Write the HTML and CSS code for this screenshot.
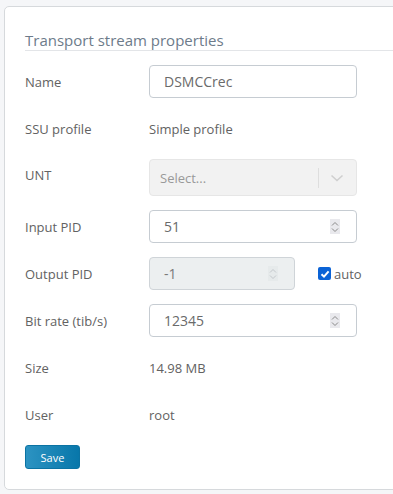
FILE: index.html
```html
<!DOCTYPE html>
<html lang="en">
<head>
  <meta charset="UTF-8" />
  <title>Transport stream properties</title>
  <link rel="stylesheet" href="styles.css">
</head>
<body>
  <div class="panel">
    <h2 class="panel-title">Transport stream properties</h2>

    <div class="form">
      <div class="row">
        <label for="tsName">Name</label>
        <input type="text" id="tsName" class="field" value="DSMCCrec" />
      </div>

      <div class="row">
        <label>SSU profile</label>
        <span class="value">Simple profile</span>
      </div>

      <div class="row row-tall">
        <label>UNT</label>
        <div class="select disabled">
          <span class="placeholder">Select...</span>
          <span class="select-sep"></span>
          <svg class="select-arrow" width="14" height="8" viewBox="0 0 14 8">
            <path d="M1.5 1.5 L7 6.5 L12.5 1.5" fill="none" stroke="#cfcfcf" stroke-width="1.6" />
          </svg>
        </div>
      </div>

      <div class="row">
        <label for="inputPid">Input PID</label>
        <div class="field number">
          <span>51</span>
          <span class="spin">
            <svg width="10" height="14" viewBox="0 0 10 14">
              <path d="M2 5.5 L5 2.5 L8 5.5 M2 8.5 L5 11.5 L8 8.5" fill="none" stroke="#8a8a8a" stroke-width="1" />
            </svg>
          </span>
        </div>
      </div>

      <div class="row">
        <label>Output PID</label>
        <div class="field number readonly short">
          <span>-1</span>
          <span class="spin">
            <svg width="10" height="14" viewBox="0 0 10 14">
              <path d="M2 5.5 L5 2.5 L8 5.5 M2 8.5 L5 11.5 L8 8.5" fill="none" stroke="#c4c8cc" stroke-width="1" />
            </svg>
          </span>
        </div>
        <label class="check">
          <span class="box">
            <svg width="12" height="12" viewBox="0 0 12 12">
              <path d="M2.5 6.2 L5 8.6 L9.6 3.4" fill="none" stroke="#fff" stroke-width="2" />
            </svg>
          </span>
          auto
        </label>
      </div>

      <div class="row">
        <label for="bitrate">Bit rate (tib/s)</label>
        <div class="field number">
          <span>12345</span>
          <span class="spin">
            <svg width="10" height="14" viewBox="0 0 10 14">
              <path d="M2 5.5 L5 2.5 L8 5.5 M2 8.5 L5 11.5 L8 8.5" fill="none" stroke="#8a8a8a" stroke-width="1" />
            </svg>
          </span>
        </div>
      </div>

      <div class="row">
        <label>Size</label>
        <span class="value">14.98 MB</span>
      </div>

      <div class="row">
        <label>User</label>
        <span class="value">root</span>
      </div>
    </div>

    <button class="btn-save">Save</button>
  </div>
</body>
</html>
```

FILE: styles.css
```css
body {
  margin: 0;
  font-family: 'Open Sans', sans-serif;
  font-size: 13px;
  color: #626262;
  background: #f5f6f8;
  overflow: hidden;
}

.panel {
  margin: 6px 0 0 4px;
  width: 430px;
  height: 484px;
  box-sizing: border-box;
  background: #fff;
  border: 1px solid #d6d9dc;
  border-radius: 5px;
  padding: 24px 0 0 20px;
}

.panel-title {
  margin: 0;
  font-size: 15px;
  font-weight: normal;
  color: #6d7b8a;
  line-height: 18px;
  padding-bottom: 1px;
  border-bottom: 1px solid #e3e5e8;
}

.form {
  display: grid;
  row-gap: 14px;
  margin-top: 14px;
}

.row {
  display: flex;
  align-items: center;
  height: 33px;
}

.row-tall {
  height: 37px;
}

.row-tall > label:first-child {
  margin-bottom: 5px;
}

.row > label:first-child {
  width: 124px;
  flex-shrink: 0;
}

.value {
  color: #626262;
}

.field {
  box-sizing: border-box;
  width: 208px;
  height: 33px;
  border: 1px solid #c6ccd2;
  border-radius: 4px;
  padding: 0 14px;
  font-family: inherit;
  font-size: 14px;
  color: #6a6a6a;
  background: #fff;
  outline: none;
}

.field.number {
  display: flex;
  align-items: center;
  justify-content: space-between;
  padding-right: 16px;
}

.spin {
  display: flex;
  align-items: center;
  justify-content: center;
  width: 10px;
  height: 15px;
  background: #e9e9ed;
}

.field.readonly {
  background: #eceff0;
  color: #7a7a7a;
  border-color: #cfd4d8;
}

.field.readonly .spin {
  background: #e6eaeb;
}

.field.short {
  width: 146px;
}

.select {
  box-sizing: border-box;
  width: 208px;
  height: 37px;
  display: flex;
  align-items: center;
  border: 1px solid #e6e6e6;
  border-radius: 4px;
  background: #f2f2f2;
  padding-left: 10px;
}

.select .placeholder {
  flex: 1;
  color: #999;
  font-size: 13px;
}

.select-sep {
  width: 1px;
  height: 20px;
  background: #dedede;
}

.select-arrow {
  margin: 0 12px 0 11px;
}

.check {
  display: flex;
  align-items: center;
  margin-left: 23px;
  font-size: 13px;
  color: #626262;
}

.check .box {
  width: 13px;
  height: 13px;
  border-radius: 2px;
  background: #0b63d6;
  display: flex;
  align-items: center;
  justify-content: center;
  margin-right: 3px;
}

.btn-save {
  margin-top: 14px;
  width: 55px;
  height: 24px;
  border: 1px solid #0b73a3;
  border-radius: 3px;
  background: linear-gradient(to right, #2c93c2, #0877aa);
  color: #fff;
  font-family: inherit;
  font-size: 11px;
  padding: 0;
  cursor: pointer;
}
```
